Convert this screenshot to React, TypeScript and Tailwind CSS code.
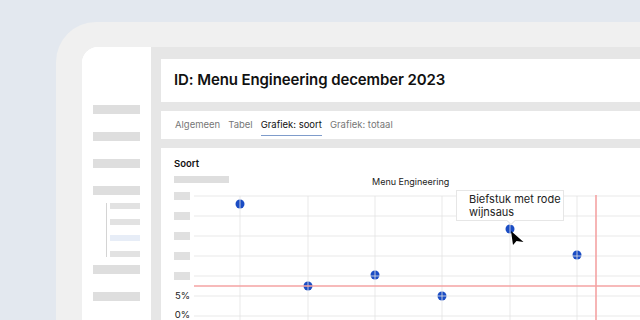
import React from "react"

const points = [
  [46, 18],
  [114, 100],
  [181, 89],
  [248, 110],
  [316, 43],
  [383, 69],
]

const gridY = [10, 30, 50, 70, 90, 110, 130]
const gridX = [46, 114, 181, 248, 316, 383]

function Sidebar() {
  const bar = "h-[9px] w-[47px] bg-[#dedede]"
  return (
    <div className="w-[69px] shrink-0 bg-white pl-[11px] pt-[58px]">
      <div className="flex flex-col gap-[18px]">
        <div className={bar} />
        <div className={bar} />
        <div className={bar} />
        <div className={bar} />
      </div>
      <div className="mt-[8px] ml-[13px] border-l border-[#d4d4d4] pl-[3px] flex flex-col gap-[10px] py-0">
        <div className="h-[6px] w-[30px] bg-[#e2e2e2]" />
        <div className="h-[6px] w-[30px] bg-[#e2e2e2]" />
        <div className="h-[6px] w-[30px] bg-[#e7edf7]" />
        <div className="h-[6px] w-[30px] bg-[#e2e2e2]" />
      </div>
      <div className="mt-[8px] flex flex-col gap-[18px]">
        <div className={bar} />
        <div className={bar} />
      </div>
    </div>
  )
}

function Plot() {
  return (
    <svg width="446" height="140" viewBox="0 0 446 140" className="block shrink-0">
      {points.map(([x, y], i) => (
        <circle key={i} cx={x} cy={y} r="4.5" fill="#1a4cc4" />
      ))}
      {gridY.map((y) => (
        <line key={"h" + y} x1="0" x2="446" y1={y} y2={y} stroke="#e3e3e3" strokeOpacity="0.8" strokeWidth="1" />
      ))}
      {gridX.map((x) => (
        <line key={"v" + x} x1={x} x2={x} y1="10" y2="140" stroke="#e3e3e3" strokeOpacity="0.8" strokeWidth="1" />
      ))}
      <line x1="0" x2="446" y1="100" y2="100" stroke="#f4a3a3" strokeWidth="1.6" />
      <line x1="402" x2="402" y1="9" y2="140" stroke="#f4a3a3" strokeWidth="1.6" />
    </svg>
  )
}

function Chart() {
  const tick = "h-[20px] flex items-center"
  return (
    <div className="relative flex-1 bg-white pl-[13px] pt-[10px]">
      <div className="text-[9.5px] leading-[12px] font-semibold text-[#111]">Soort</div>
      <div className="relative mt-[6px] h-[7px] w-[55px] bg-[#dedede]">
        <div className="absolute left-[198px] top-[0px] whitespace-nowrap text-[9px] leading-[12px] text-[#222]">
          Menu Engineering
        </div>
      </div>
      <div className="mt-[3px] flex">
        <div className="w-[16px] shrink-0 flex flex-col">
          <div className={tick}><div className="h-[8px] w-[16px] bg-[#e0e0e0]" /></div>
          <div className={tick}><div className="h-[8px] w-[16px] bg-[#e0e0e0]" /></div>
          <div className={tick}><div className="h-[8px] w-[16px] bg-[#e0e0e0]" /></div>
          <div className={tick}><div className="h-[8px] w-[16px] bg-[#e0e0e0]" /></div>
          <div className={tick}><div className="h-[8px] w-[16px] bg-[#e0e0e0]" /></div>
          <div className={tick + " justify-end text-[9.5px] text-[#222]"}>5%</div>
          <div className={tick + " justify-end text-[9.5px] leading-[10px] text-[#222] pb-[2px]"}>0%</div>
        </div>
        <div className="ml-[4px]">
          <Plot />
        </div>
      </div>

      {/* tooltip */}
      <div className="absolute left-[295px] top-[42px] h-[31px] w-[108px] border border-[#e6e6e6] bg-white pl-[12px] pt-[2px] text-[11px] leading-[13px] text-[#222]">
        <div>Biefstuk met rode</div>
        <div>wijnsaus</div>
        <div className="absolute left-[51px] bottom-[-4px] h-[6px] w-[6px] rotate-45 border-b border-r border-[#e6e6e6] bg-white" />
      </div>

      {/* cursor */}
      <svg className="absolute left-[349px] top-[82px]" width="15" height="16" viewBox="0 0 15 16">
        <path d="M1 1 L3 15 L6.5 11 L13.5 12 Z" fill="#000" />
      </svg>
    </div>
  )
}

export default function App() {
  return (
    <div
      className="h-[320px] w-[640px] overflow-hidden bg-[#e3e8ef] pl-[56px] pt-[22px]"
      style={{ fontFamily: "Inter, 'Noto Sans', sans-serif" }}
    >
      <div className="h-[320px] rounded-tl-[40px] bg-[#f0f0f0] pl-[26px] pt-[25px]">
        <div className="flex h-[300px] overflow-hidden rounded-tl-[16px] bg-white">
          <Sidebar />
          <div className="flex flex-1 flex-col bg-[#e6e6e6] pl-[10px] pt-[12px]">
            <div className="flex h-[43px] shrink-0 items-center bg-white pl-[13px]">
              <h1 className="text-[15px] font-semibold tracking-[-0.1px] text-[#111]">
                ID: Menu Engineering december 2023
              </h1>
            </div>
            <div className="mt-[9px] flex h-[28px] shrink-0 items-center gap-[8px] bg-white pl-[14px] text-[9.5px] text-[#777]">
              <span>Algemeen</span>
              <span>Tabel</span>
              <span className="relative text-[#111]">
                Grafiek: soort
                <span className="absolute left-0 right-0 bottom-[-4px] h-[1.5px] bg-[#7f9ccb]" />
              </span>
              <span>Grafiek: totaal</span>
            </div>
            <div className="mt-[9px] flex flex-1">
              <Chart />
            </div>
          </div>
        </div>
      </div>
    </div>
  )
}
